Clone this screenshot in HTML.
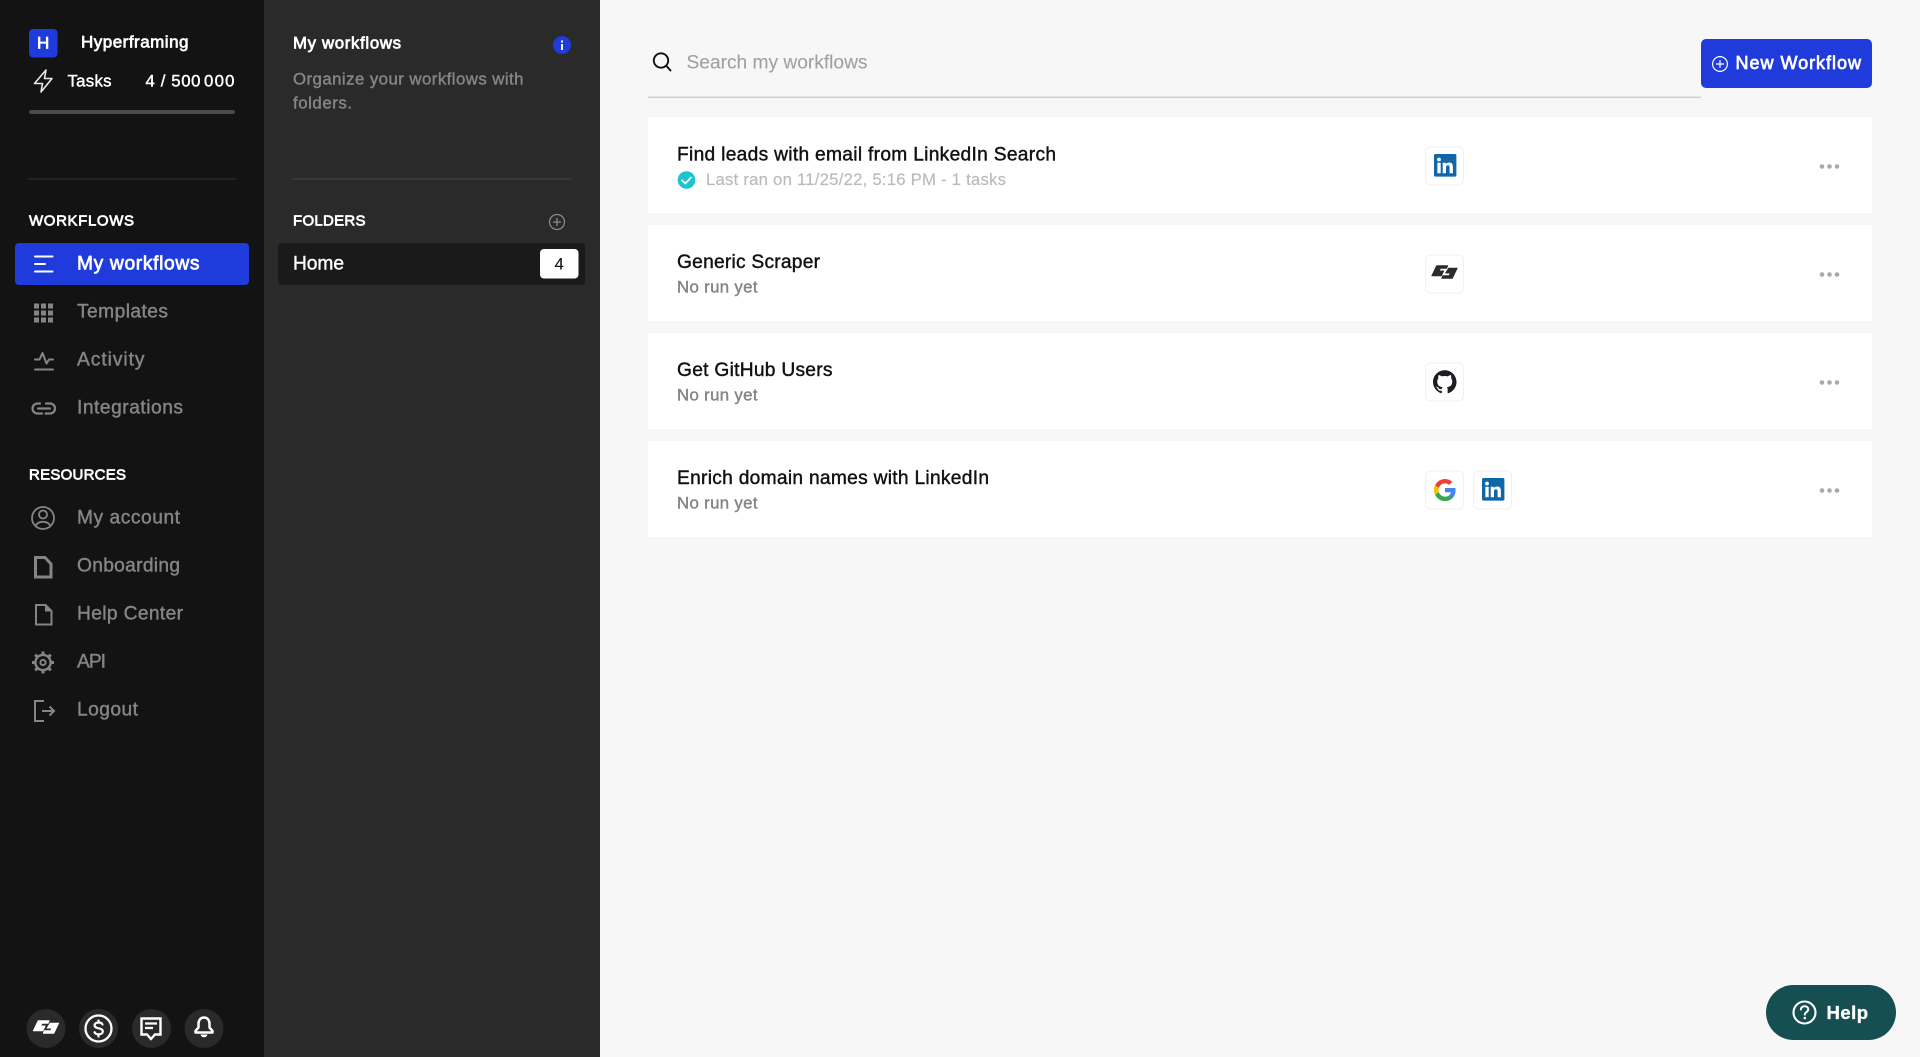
<!DOCTYPE html>
<html lang="en">
<head>
<meta charset="utf-8">
<title>My workflows</title>
<style>
html,body{margin:0;padding:0;width:1920px;height:1057px;overflow:hidden;background:#f7f7f7}
svg{display:block}
text{font-family:"Liberation Sans",Arial,sans-serif;stroke-linejoin:round}
.f16{font-size:16.8px}.f15{font-size:15px}.f17{font-size:17px}.f18{font-size:19.2px}
.r{stroke-width:.12}.m{stroke-width:.42}.s{stroke-width:.72}
.w{fill:#fff;stroke:#fff}.g{fill:#858585;stroke:#858585}.k{fill:#111;stroke:#111}
.ic{fill:none;stroke:#858585;stroke-width:2;stroke-linecap:round;stroke-linejoin:round}
.wi{fill:none;stroke:#fff;stroke-width:2;stroke-linecap:round;stroke-linejoin:round}
</style>
</head>
<body>
<svg width="1920" height="1057" viewBox="0 0 1920 1057" xmlns="http://www.w3.org/2000/svg">
<defs>
<g id="logo" stroke-width=".5" stroke-linejoin="round"><path d="M5 0H16.5L15.3 3H9L8 5.3H12.5L10 10.5H0Z"/><path d="M17 2.5H26L21 13H10L11.2 10H17.5L18.5 7.7H13.8Z"/></g>
<g id="li"><rect width="22.4" height="22.6" rx="1.6" fill="#0f67a8"/><path fill="#fff" d="M3.4 8.8h3.3v10.4H3.4zM5 3.6a1.9 1.9 0 1 1 0 3.8 1.9 1.9 0 0 1 0-3.8zM8.7 8.8h3.1v1.4c.5-.9 1.6-1.7 3.2-1.7 3.3 0 3.9 2.1 3.9 4.9v5.8h-3.3v-5.1c0-1.2 0-2.8-1.7-2.8s-1.9 1.3-1.9 2.7v5.2H8.7z"/></g>
<g id="dots" fill="#a9a9a9"><circle cx="-7.5" cy="0" r="2.3"/><circle cx="0" cy="0" r="2.3"/><circle cx="7.5" cy="0" r="2.3"/></g>
</defs>

<rect width="1920" height="1057" fill="#f7f7f7"/>
<rect width="264" height="1057" fill="#131313"/>
<rect x="264" width="336" height="1057" fill="#2a2a2a"/>

<!-- account -->
<rect x="29" y="29" width="28.5" height="28.5" rx="4" fill="#1f3bdc"/>
<text x="37" y="48.5" class="f17 w s">H</text>
<text x="81" y="47.6" textLength="107.5" lengthAdjust="spacing" class="f17 w s">Hyperframing</text>
<path d="M46 70 L34.5 83.5 H42.5 L41 92 L52 78.5 H44.5 Z" fill="none" stroke="#e8e8e8" stroke-width="1.6" stroke-linejoin="round"/>
<text x="67.5" y="86.5" textLength="44" lengthAdjust="spacing" class="f16 w m">Tasks</text>
<text x="145.5" y="86.5" textLength="55" lengthAdjust="spacing" class="f16 w m">4 / 500</text>
<text x="204" y="86.5" textLength="30.5" lengthAdjust="spacing" class="f16 w m">000</text>
<rect x="29" y="110" width="206" height="4" rx="2" fill="#4b4b4b"/>
<rect x="28" y="178.5" width="208" height="1" fill="#333"/>

<!-- nav -->
<text x="29" y="225.6" textLength="105" lengthAdjust="spacing" class="f15 w s">WORKFLOWS</text>
<rect x="15" y="243" width="234" height="42" rx="4" fill="#1f3bdc"/>
<path class="wi" d="M35 256.5H52.5M35 264H45M35 271.5H52.5"/>
<text x="77" y="269.6" textLength="122.5" lengthAdjust="spacing" class="f18 w s">My workflows</text>

<g fill="#858585">
<rect x="34" y="303.5" width="5" height="5"/><rect x="41" y="303.5" width="5" height="5"/><rect x="48" y="303.5" width="5" height="5"/>
<rect x="34" y="310.5" width="5" height="5"/><rect x="41" y="310.5" width="5" height="5"/><rect x="48" y="310.5" width="5" height="5"/>
<rect x="34" y="317.5" width="5" height="5"/><rect x="41" y="317.5" width="5" height="5"/><rect x="48" y="317.5" width="5" height="5"/>
</g>
<text x="77" y="317.6" textLength="91" lengthAdjust="spacing" class="f18 g m">Templates</text>

<path class="ic" d="M35 369.5H53M35 359.5H39.5L42.5 353L46.5 363.5L49 359.5H53"/>
<text x="77" y="365.6" textLength="67.5" lengthAdjust="spacing" class="f18 g m">Activity</text>

<path class="ic" style="stroke-width:2.2" d="M40 403.5H37.5a5 5 0 0 0 0 10H42M46 403.5H50a5 5 0 0 1 0 10H45.5M38 408.5H50"/>
<text x="77" y="413.6" textLength="106" lengthAdjust="spacing" class="f18 g m">Integrations</text>

<text x="29" y="479.7" textLength="97" lengthAdjust="spacing" class="f15 w s">RESOURCES</text>

<circle cx="43" cy="518" r="11" class="ic" style="stroke-width:1.8"/>
<circle cx="43" cy="514.5" r="4" class="ic" style="stroke-width:1.8"/>
<path class="ic" style="stroke-width:1.8" d="M35.5 526c1.5-3 4.3-4.2 7.5-4.2s6 1.2 7.5 4.2"/>
<text x="77" y="523.6" textLength="103" lengthAdjust="spacing" class="f18 g m">My account</text>

<path class="ic" style="stroke-width:3;stroke-linejoin:miter" d="M35.5 557.5H45L51 564V577H35.5Z"/>
<text x="77" y="571.6" textLength="103" lengthAdjust="spacing" class="f18 g m">Onboarding</text>

<path class="ic" style="stroke-width:2;stroke-linejoin:miter" d="M36 605H45.5L51.5 611V624.5H36Z"/>
<path d="M45 605L51.5 611.5H45Z" fill="#858585"/>
<text x="77" y="619.6" textLength="106" lengthAdjust="spacing" class="f18 g m">Help Center</text>

<circle cx="43" cy="662.5" r="7.6" class="ic" style="stroke-width:2.4"/>
<circle cx="43" cy="662.5" r="2.6" class="ic" style="stroke-width:2"/>
<path class="ic" style="stroke-width:3;stroke-linecap:butt" d="M43 651.5V654.5M43 670.5V673.5M32 662.5H35M51 662.5H54M35.2 654.7L37.3 656.8M48.7 668.2L50.8 670.3M35.2 670.3L37.3 668.2M48.7 656.8L50.8 654.7"/>
<text x="77" y="667.6" textLength="29" lengthAdjust="spacing" class="f18 g m">API</text>

<path class="ic" style="stroke-width:2;stroke-linecap:butt;stroke-linejoin:miter" d="M44 701H35V721H44M42 711H54M49.5 706.5L54 711L49.5 715.5"/>
<text x="77" y="715.6" textLength="61" lengthAdjust="spacing" class="f18 g m">Logout</text>

<!-- bottom icons -->
<circle cx="46" cy="1028.5" r="19.5" fill="#2a2a2a"/>
<circle cx="98.5" cy="1028.5" r="19.5" fill="#2a2a2a"/>
<circle cx="151.5" cy="1028.5" r="19.5" fill="#2a2a2a"/>
<circle cx="204" cy="1028.5" r="19.5" fill="#2a2a2a"/>
<use href="#logo" x="33" y="1020.5" fill="#fff" stroke="#fff"/>
<circle cx="98.5" cy="1028.5" r="13" class="wi" style="stroke-width:2.3"/>
<path class="wi" style="stroke-width:2.2" d="M102.5 1024.5c-.5-1.3-2-2-4-2-2.3 0-3.9 1.1-3.9 2.9 0 3.9 8.2 2 8.2 6 0 1.8-1.7 2.9-4.1 2.9-2 0-3.6-.7-4.2-2.1M98.5 1020.5V1022.5M98.5 1034.5V1036.5"/>
<path class="wi" style="stroke-width:2.4;stroke-linejoin:miter;stroke-linecap:butt" d="M141.5 1018.5H160.5V1034.5H155L151 1039L147 1034.5H141.5Z"/>
<path class="wi" style="stroke-width:2.2;stroke-linecap:butt" d="M145 1023.5H157M145 1028H153"/>
<path class="wi" style="stroke-width:2.5" d="M204 1017.5c-3.6 0-5.5 2.9-5.5 6.2v3.8l-3 3.4v1.6h17v-1.6l-3-3.4v-3.8c0-3.3-1.9-6.2-5.5-6.2z"/>
<path d="M200.5 1034.5h7c-.4 1.8-1.8 2.8-3.5 2.8s-3.1-1-3.5-2.8z" fill="#fff"/>

<!-- folders panel -->
<text x="293" y="48.6" textLength="108" lengthAdjust="spacing" class="f16 w s">My workflows</text>
<circle cx="562" cy="45" r="9" fill="#1f3bdc"/>
<rect x="561" y="44" width="2" height="6" fill="#fff"/><rect x="561" y="40.5" width="2" height="2" fill="#fff"/>
<text x="293" y="84.5" textLength="230.5" lengthAdjust="spacing" class="f16 g m">Organize your workflows with</text>
<text x="293" y="108.5" textLength="59" lengthAdjust="spacing" class="f16 g m">folders.</text>
<rect x="292" y="178.5" width="279.5" height="1" fill="#444"/>
<text x="293" y="225.6" textLength="72.5" lengthAdjust="spacing" class="f15 w s">FOLDERS</text>
<circle cx="557" cy="222" r="7.5" fill="none" stroke="#8a8a8a" stroke-width="1.3"/>
<path d="M557 218V226M553 222H561" stroke="#8a8a8a" stroke-width="1.3"/>
<rect x="278" y="243" width="307" height="42" rx="4" fill="#1a1a1a"/>
<text x="293" y="269.6" textLength="51" lengthAdjust="spacing" class="f18 w m">Home</text>
<rect x="540" y="249" width="38.5" height="29.5" rx="4" fill="#fff"/>
<text x="554.5" y="269.5" class="f16 k r">4</text>

<!-- search -->
<circle cx="661" cy="60.5" r="7.2" fill="none" stroke="#111" stroke-width="1.9"/>
<path d="M666.5 66L670.5 70.5" stroke="#111" stroke-width="1.9" stroke-linecap="round"/>
<text x="686.5" y="68.3" textLength="181" lengthAdjust="spacing" class="f18" fill="#a0a0a0" stroke="#a0a0a0" stroke-width=".1">Search my workflows</text>
<rect x="648" y="96.5" width="1053" height="1.6" fill="#d2d2d2"/>
<rect x="1701" y="39" width="171" height="49" rx="5" fill="#1f3bdc"/>
<circle cx="1720" cy="64" r="7.4" fill="none" stroke="#fff" stroke-width="1.2"/>
<path d="M1720 60V68M1716 64H1724" stroke="#fff" stroke-width="1.2"/>
<text x="1735.5" y="69" textLength="125.5" lengthAdjust="spacing" style="font-size:18px" class="w s">New Workflow</text>

<!-- cards -->
<rect x="648" y="117" width="1224" height="96" fill="#fff"/>
<rect x="648" y="225" width="1224" height="96" fill="#fff"/>
<rect x="648" y="333" width="1224" height="96" fill="#fff"/>
<rect x="648" y="441" width="1224" height="96" fill="#fff"/>

<text x="677" y="160.4" textLength="379" lengthAdjust="spacing" class="f18 k m">Find leads with email from LinkedIn Search</text>
<circle cx="686.5" cy="180" r="8.8" fill="#1cc4d0"/>
<path d="M682 180.3L685.3 183.5L691 177.5" fill="none" stroke="#fff" stroke-width="1.7" stroke-linecap="round" stroke-linejoin="round"/>
<text x="706" y="185" textLength="300" lengthAdjust="spacing" class="f16" fill="#bababa" stroke="#bababa" stroke-width=".15">Last ran on 11/25/22, 5:16 PM - 1 tasks</text>

<text x="677" y="268" textLength="143" lengthAdjust="spacing" class="f18 k m">Generic Scraper</text>
<text x="677" y="292.6" textLength="80.5" lengthAdjust="spacing" class="f16 g m">No run yet</text>

<text x="677" y="376" textLength="155.5" lengthAdjust="spacing" class="f18 k m">Get GitHub Users</text>
<text x="677" y="400.6" textLength="80.5" lengthAdjust="spacing" class="f16 g m">No run yet</text>

<text x="677" y="484" textLength="312" lengthAdjust="spacing" class="f18 k m">Enrich domain names with LinkedIn</text>
<text x="677" y="508.6" textLength="80.5" lengthAdjust="spacing" class="f16 g m">No run yet</text>

<!-- app icons -->
<g fill="#fff" stroke="#f1f1f1" stroke-width="1">
<rect x="1425.5" y="147" width="38" height="38" rx="5"/>
<rect x="1425.5" y="255" width="38" height="38" rx="5"/>
<rect x="1425.5" y="363" width="38" height="38" rx="5"/>
<rect x="1425.5" y="471" width="38" height="38" rx="5"/>
<rect x="1473.5" y="471" width="38" height="38" rx="5"/>
</g>
<use href="#li" x="1434" y="154"/>
<use href="#logo" x="1431.5" y="265.5" fill="#2b2b2b" stroke="#2b2b2b"/>
<path transform="translate(1433 370) scale(.98)" fill="#1b1f23" d="M12 .297c-6.63 0-12 5.373-12 12 0 5.303 3.438 9.8 8.205 11.385.6.113.82-.258.82-.577 0-.285-.01-1.04-.015-2.04-3.338.724-4.042-1.61-4.042-1.61C4.422 18.07 3.633 17.7 3.633 17.7c-1.087-.744.084-.729.084-.729 1.205.084 1.838 1.236 1.838 1.236 1.07 1.835 2.809 1.305 3.495.998.108-.776.417-1.305.76-1.605-2.665-.3-5.466-1.332-5.466-5.93 0-1.31.465-2.38 1.235-3.22-.135-.303-.54-1.523.105-3.176 0 0 1.005-.322 3.3 1.23.96-.267 1.98-.399 3-.405 1.02.006 2.04.138 3 .405 2.28-1.552 3.285-1.23 3.285-1.23.645 1.653.24 2.873.12 3.176.765.84 1.23 1.91 1.23 3.22 0 4.61-2.805 5.625-5.475 5.92.42.36.81 1.096.81 2.22 0 1.606-.015 2.896-.015 3.286 0 .315.21.69.825.57C20.565 22.092 24 17.592 24 12.297c0-6.627-5.373-12-12-12"/>
<g transform="translate(1433 478)">
<path fill="#4285F4" d="M22.56 12.25c0-.78-.07-1.53-.2-2.25H12v4.26h5.92c-.26 1.37-1.04 2.53-2.21 3.31v2.77h3.57c2.08-1.92 3.28-4.74 3.28-8.09z"/>
<path fill="#34A853" d="M12 23c2.97 0 5.46-.98 7.28-2.66l-3.57-2.77c-.98.66-2.23 1.06-3.71 1.06-2.86 0-5.29-1.93-6.16-4.53H2.18v2.84C3.99 20.53 7.7 23 12 23z"/>
<path fill="#FBBC05" d="M5.84 14.09c-.22-.66-.35-1.36-.35-2.09s.13-1.43.35-2.09V7.07H2.18C1.43 8.55 1 10.22 1 12s.43 3.45 1.18 4.93l2.85-2.22.81-.62z"/>
<path fill="#EA4335" d="M12 5.38c1.62 0 3.06.56 4.21 1.64l3.15-3.15C17.45 2.09 14.97 1 12 1 7.7 1 3.99 3.47 2.18 7.07l3.66 2.84c.87-2.6 3.3-4.53 6.16-4.53z"/>
</g>
<use href="#li" x="1482" y="478"/>

<use href="#dots" x="1829.5" y="166.5"/>
<use href="#dots" x="1829.5" y="274.5"/>
<use href="#dots" x="1829.5" y="382.5"/>
<use href="#dots" x="1829.5" y="490.5"/>

<!-- help -->
<rect x="1766" y="985" width="130" height="55" rx="27.5" fill="#154f52"/>
<circle cx="1804.5" cy="1012.5" r="11" fill="none" stroke="#fff" stroke-width="2.1"/>
<path d="M1800.8 1009.5c.2-2.2 1.8-3.3 3.8-3.3s3.7 1.2 3.7 3.1c0 2.8-3.5 2.8-3.5 5.3" fill="none" stroke="#fff" stroke-width="2" stroke-linecap="round"/>
<circle cx="1804.8" cy="1018" r="1.3" fill="#fff"/>
<text x="1826.5" y="1019" textLength="41.5" lengthAdjust="spacing" style="font-size:18.5px;font-weight:700;stroke-width:.35" class="w">Help</text>
</svg>
</body>
</html>
